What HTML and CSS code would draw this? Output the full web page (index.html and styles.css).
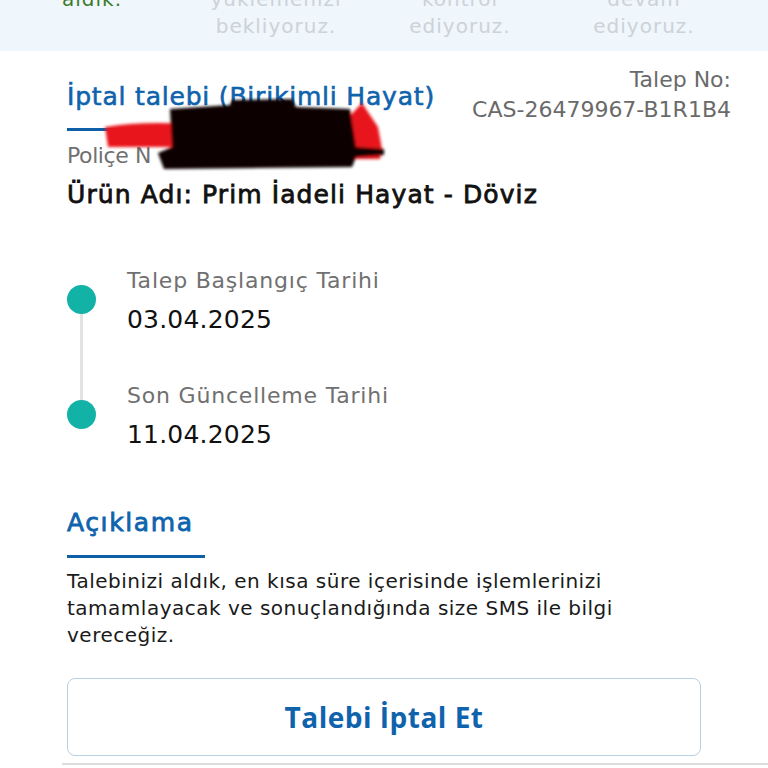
FILE: index.html
```html
<!DOCTYPE html>
<html lang="tr">
<head>
<meta charset="utf-8">
<link rel="stylesheet" href="styles.css">
</head>
<body>
<div class="steps">
  <div class="steps-grid">
    <div class="step done">Talebinizi<br>aldık.</div>
    <div class="step">Belge<br>yüklemenizi<br>bekliyoruz.</div>
    <div class="step">Talebinizi<br>kontrol<br>ediyoruz.</div>
    <div class="step">İşleme<br>devam<br>ediyoruz.</div>
  </div>
</div>
<main class="detail">
  <div class="head">
    <div class="head-left">
      <h1 class="title">İptal talebi (Birikimli Hayat)</h1>
      <div class="bar"></div>
    </div>
    <div class="req-no">Talep No:<br>CAS-26479967-B1R1B4</div>
    <svg class="redact" width="300" height="80" viewBox="0 0 300 80">
      <defs><filter id="b" x="-10%" y="-20%" width="120%" height="140%"><feGaussianBlur stdDeviation="1.6"/></filter></defs>
      <g filter="url(#b)">
        <path d="M5 30 Q40 24 90 27 L245 24 L262 6 L278 30 L282 52 L280 62 L150 62 L70 50 L8 50 Z" fill="#e8141b"/>
        <path d="M70 12 L130 8 L132 3 L192 2 L196 10 L250 12 L256 50 L284 52 L284 58 L256 60 L252 70 L64 72 L58 56 L72 50 Z" fill="#0b0203"/>
      </g>
    </svg>
  </div>
  <p class="policy">Poliçe N</p>
  <p class="product">Ürün Adı: Prim İadeli Hayat - Döviz</p>

  <ul class="timeline">
    <li class="tl-item">
      <span class="tl-dot"></span>
      <div class="tl-text">
        <span class="tl-label">Talep Başlangıç Tarihi</span>
        <span class="tl-value">03.04.2025</span>
      </div>
    </li>
    <li class="tl-item">
      <span class="tl-dot"></span>
      <div class="tl-text">
        <span class="tl-label">Son Güncelleme Tarihi</span>
        <span class="tl-value">11.04.2025</span>
      </div>
    </li>
  </ul>

  <h2 class="sub">Açıklama</h2>
  <div class="bar"></div>
  <p class="desc">Talebinizi aldık, en kısa süre içerisinde işlemlerinizi tamamlayacak ve sonuçlandığında size SMS ile bilgi vereceğiz.</p>

  <button class="btn">Talebi İptal Et</button>
</main>
<div class="bottom-line"></div>
</body>
</html>
```
FILE: styles.css
```css
* { box-sizing: border-box; }
html, body { margin: 0; padding: 0; }
body {
  width: 768px;
  height: 768px;
  overflow: hidden;
  background: #fff;
  font-family: "DejaVu Sans", "Noto Sans", sans-serif;
  color: #141414;
}
.steps {
  height: 51px;
  background: #eff6fc;
  overflow: hidden;
  display: flex;
  align-items: flex-end;
  padding-bottom: 11px;
}
.steps-grid {
  display: grid;
  grid-template-columns: repeat(4, 184px);
  align-items: start;
  width: 100%;
}
.step {
  text-align: center;
  font-size: 20px;
  letter-spacing: 1px;
  line-height: 27px;
  color: #cdd2d7;
}
.step.done { color: #3d7b2b; }

.detail {
  padding: 0 37px 0 67px;
  position: relative;
}
.head {
  display: flex;
  justify-content: space-between;
  align-items: flex-start;
  padding-top: 14px;
  position: relative;
}
.title {
  margin: 0;
  font-size: 25px;
  letter-spacing: 0.8px;
  font-weight: normal;
  color: #0f63ad;
  line-height: 34px;
  padding-top: 15px;
  -webkit-text-stroke: 0.6px #0f63ad;
  white-space: nowrap;
}
.bar {
  width: 138px;
  height: 3px;
  background: #0e5ea8;
}
.head-left .bar { margin-top: 14px; }
.req-no {
  text-align: right;
  font-size: 22px;
  line-height: 30px;
  color: #6a6a6a;
}
.redact {
  position: absolute;
  left: 33px;
  top: 46px;
}
.policy {
  margin: 10px 0 0;
  font-size: 22px;
  letter-spacing: -0.4px;
  line-height: 30px;
  color: #707070;
}
.product {
  margin: 8px 0 0;
  font-size: 25px;
  letter-spacing: 1.1px;
  font-weight: normal;
  -webkit-text-stroke: 0.8px #111;
  line-height: 32px;
  color: #111;
  white-space: nowrap;
}
.timeline {
  list-style: none;
  margin: 31px 0 0;
  padding: 0;
  position: relative;
}
.timeline::before {
  content: "";
  position: absolute;
  left: 13px;
  top: 57px;
  height: 115px;
  width: 3px;
  background: #e3e3e3;
}
.tl-item {
  display: flex;
  align-items: center;
  height: 115px;
  position: relative;
}
.tl-dot {
  width: 29px;
  height: 29px;
  border-radius: 50%;
  background: #13b2a6;
  flex: none;
  position: relative;
}
.tl-text {
  display: flex;
  flex-direction: column;
  margin-left: 31px;
}
.tl-label {
  font-size: 22px;
  letter-spacing: 0.8px;
  line-height: 39px;
  color: #707070;
}
.tl-value {
  font-size: 25px;
  letter-spacing: 0.2px;
  line-height: 39px;
  color: #111;
}
.sub {
  margin: 34px 0 0;
  font-size: 25px;
  letter-spacing: 1.6px;
  font-weight: normal;
  -webkit-text-stroke: 0.8px #0f63ad;
  color: #0f63ad;
  line-height: 34px;
}
.sub + .bar { margin-top: 15px; }
.desc {
  margin: 10px 0 0;
  font-size: 20px;
  letter-spacing: 0.5px;
  line-height: 27px;
  color: #1a1a1a;
  max-width: 600px;
}
.btn {
  display: block;
  margin: 29px 0 0;
  width: 634px;
  height: 78px;
  border: 1.5px solid #b9cfe2;
  border-radius: 8px;
  background: #fff;
  font-family: "Open Sans", sans-serif;
  font-size: 28px;
  letter-spacing: 0.5px;
  font-weight: 700;
  color: #0f63ad;
}
.bottom-line {
  margin: 7px 0 0 62px;
  height: 2px;
  background: #dddddd;
}
```
